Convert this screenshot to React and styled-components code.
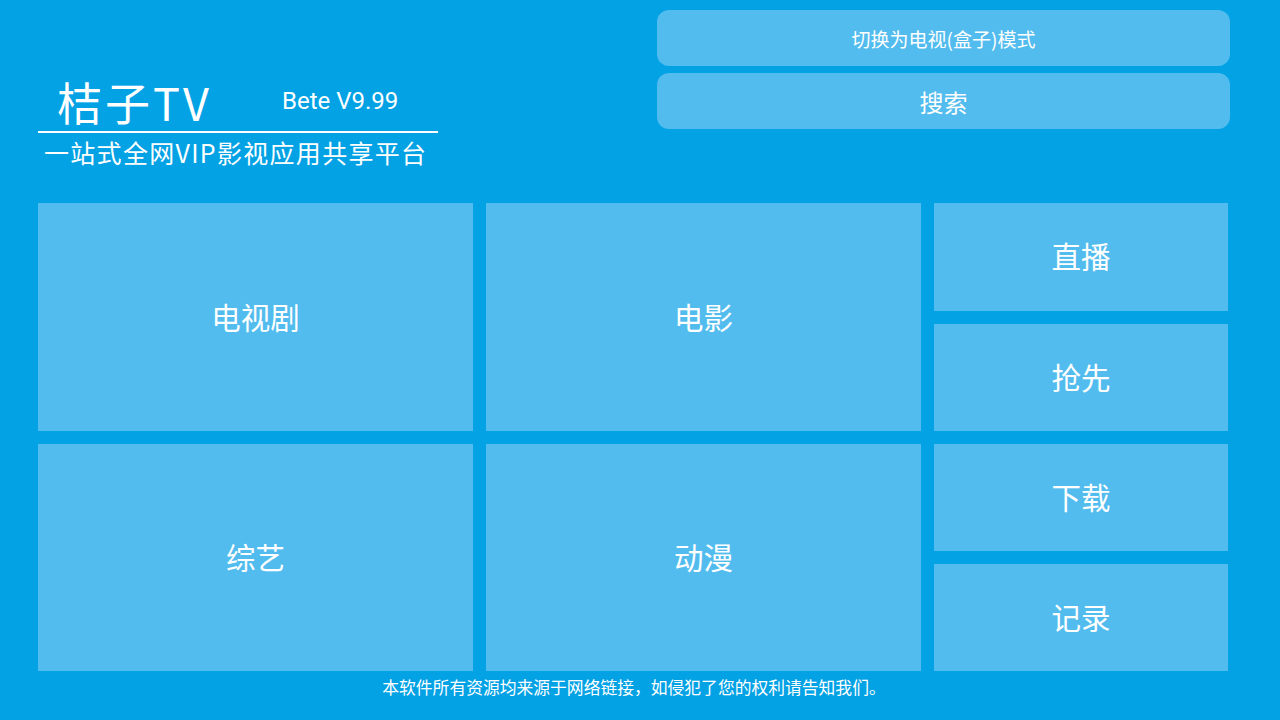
import React from "react";
import styled, {createGlobalStyle} from "styled-components";

const GlobalStyle = createGlobalStyle`
    html, body {
        margin: 0;
        padding: 0;
        background: #03a2e5;
    }
    body {
        font-family: Roboto, "Noto Sans CJK SC", sans-serif;
        color: #fff;
    }
`;

const bigTiles = [
    {id: "tv", name: "电视剧"},
    {id: "movie", name: "电影"},
    {id: "variety", name: "综艺"},
    {id: "anime", name: "动漫"},
];

const smallTiles = [
    ["直播", "抢先"],
    ["下载", "记录"],
];

const App = () => {
    return (
        <Screen>
            <GlobalStyle/>
            <Header>
                <Brand>
                    <TitleRow>
                        <AppName>桔子TV</AppName>
                        <Version>Bete V9.99</Version>
                    </TitleRow>
                    <Divider/>
                    <Slogan>一站式全网VIP影视应用共享平台</Slogan>
                </Brand>
                <Actions>
                    <PillButton $size={19}>切换为电视(盒子)模式</PillButton>
                    <PillButton $size={24}>搜索</PillButton>
                </Actions>
            </Header>

            <Board>
                <Tile style={{gridArea: "1 / 1"}}>{bigTiles[0].name}</Tile>
                <Tile style={{gridArea: "1 / 2"}}>{bigTiles[1].name}</Tile>
                <Tile style={{gridArea: "2 / 1"}}>{bigTiles[2].name}</Tile>
                <Tile style={{gridArea: "2 / 2"}}>{bigTiles[3].name}</Tile>
                {smallTiles.map((pair, i) => (
                    <SideStack key={i} style={{gridArea: `${i + 1} / 3`}}>
                        {pair.map((name) => (
                            <Tile key={name}>{name}</Tile>
                        ))}
                    </SideStack>
                ))}
            </Board>

            <Notice>本软件所有资源均来源于网络链接，如侵犯了您的权利请告知我们。</Notice>
        </Screen>
    );
};

export default App;

// Styled Components
const Screen = styled.div`
    width: 1280px;
    height: 720px;
    background: #03a2e5;
    display: flex;
    flex-direction: column;
    overflow: hidden;
`;

const Header = styled.div`
    height: 203px;
    box-sizing: border-box;
    padding: 10px 50px 0 38px;
    display: flex;
    justify-content: space-between;
    align-items: flex-start;
`;

const Brand = styled.div`
    width: 400px;
    padding-top: 63px;
    display: flex;
    flex-direction: column;
`;

const TitleRow = styled.div`
    display: flex;
    align-items: center;
    padding-left: 19px;
    height: 58px;
`;

const AppName = styled.span`
    font-family: "Noto Sans CJK SC", sans-serif;
    font-size: 45px;
    line-height: 52px;
    letter-spacing: 3px;
    width: 225px;
`;

const Version = styled.span`
    font-family: Roboto, sans-serif;
    font-size: 24px;
    padding-bottom: 2px;
`;

const Divider = styled.div`
    height: 2px;
    background: #fff;
`;

const Slogan = styled.div`
    font-family: "Noto Sans CJK SC", sans-serif;
    font-size: 25px;
    line-height: 36px;
    letter-spacing: 1.3px;
    padding-left: 6px;
    padding-top: 1px;
    white-space: nowrap;
`;

const Actions = styled.div`
    width: 573px;
    display: flex;
    flex-direction: column;
    gap: 7px;
`;

const PillButton = styled.div`
    height: 56px;
    border-radius: 12px;
    background: #52bcee;
    display: flex;
    align-items: center;
    justify-content: center;
    font-family: "Noto Sans CJK SC", sans-serif;
    font-size: ${(p) => p.$size}px;
`;

const Board = styled.div`
    margin-left: 38px;
    display: grid;
    grid-template-columns: 435px 435px 294px;
    grid-template-rows: 228px 227px;
    gap: 13px;
`;

const SideStack = styled.div`
    display: grid;
    grid-template-rows: 1fr 1fr;
    gap: 13px;
`;

const Tile = styled.div`
    background: #52bcee;
    display: flex;
    align-items: center;
    justify-content: center;
    padding-bottom: 3px;
    font-family: "Noto Sans CJK SC", sans-serif;
    font-size: 29.5px;
`;

const Notice = styled.div`
    margin-top: 5px;
    text-align: center;
    font-family: "Noto Sans CJK SC", sans-serif;
    font-size: 16.8px;
    line-height: 22px;
    padding-right: 12px;
`;
